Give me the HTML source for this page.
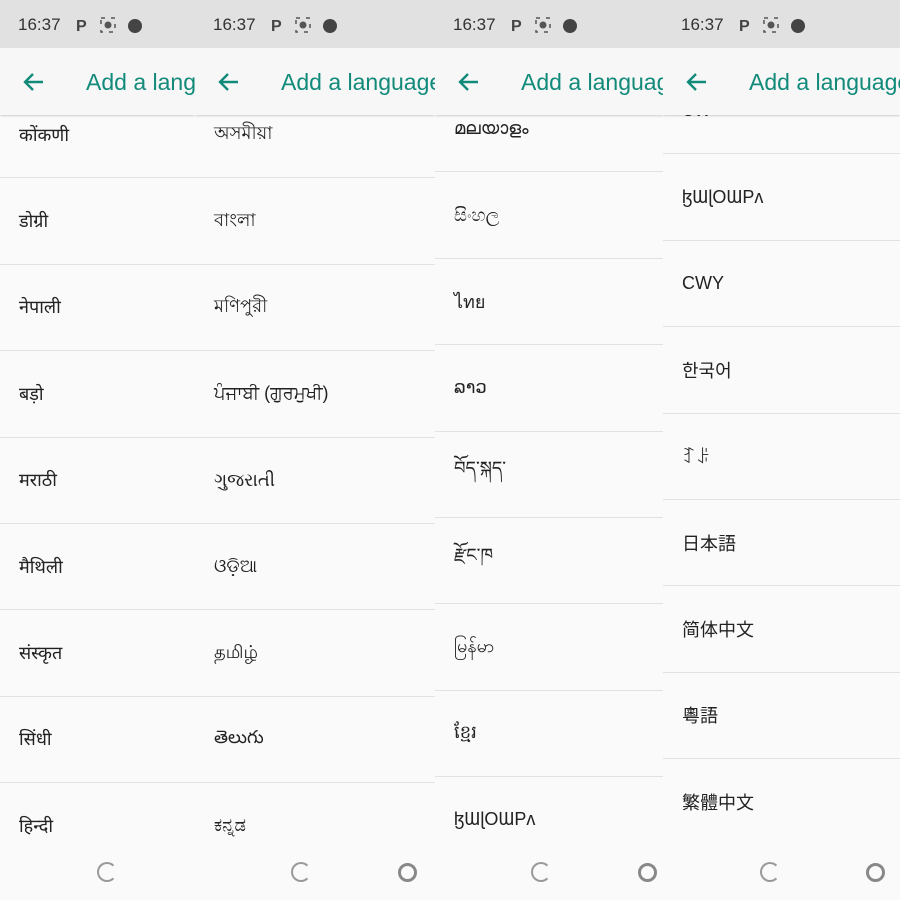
<!DOCTYPE html>
<html><head><meta charset="utf-8"><style>
*{margin:0;padding:0;box-sizing:border-box}
body{width:900px;height:900px;overflow:hidden;background:#fafafa;font-family:"Liberation Sans","Noto Sans CJK SC",sans-serif;position:relative}
.col{position:absolute;top:0;height:900px;overflow:hidden;background:#fafafa}
.sb{position:absolute;top:0;left:0;right:0;height:48px;background:#e1e1e1;z-index:3}
.sb .t{position:absolute;left:18px;top:15px;font-size:17px;color:#333}
.sb .ic{position:absolute;top:17px}
.tb{position:absolute;top:48px;left:0;right:0;height:67px;background:#f7f7f7;z-index:2;box-shadow:0 1px 2px rgba(0,0,0,.18);white-space:nowrap}
.tb .ar{position:absolute;left:22px;top:22px}
.tb .ti{position:absolute;left:86px;top:21px;font-size:23px;color:#128a7a}
.list{position:absolute;left:0;right:0}
.row{height:86.4px;border-bottom:1.5px solid #e2e2e2;display:flex;align-items:center;padding-left:19px;font-size:18px;font-weight:normal;color:#222;font-family:"Liberation Sans","DejaVu Sans","Noto Sans CJK JP",sans-serif}
.nav{position:absolute;top:845px;left:0;right:0;height:55px;background:#fafafa;z-index:2}
.ld{position:absolute;top:17px;width:20px;height:20px;border:2px solid #999;border-radius:50%;border-right-color:transparent;border-top-color:#999}
.rg{position:absolute;top:18px;width:19px;height:19px;border:3px solid #888;border-radius:50%}
</style></head><body>

<div class="col" style="left:0;width:195px">
 <div class="sb"><span class="t">16:37</span>
  <svg class="ic" style="left:76px" width="68" height="16"><text x="0" y="14" font-family="Liberation Sans" font-weight="bold" font-size="16" fill="#444">P</text><rect x="25" y="1" width="14" height="14" fill="none" stroke="#555" stroke-dasharray="4 6" stroke-width="1.5"/><circle cx="32" cy="8" r="3.5" fill="#555"/><circle cx="59" cy="9" r="7" fill="#444"/></svg></div>
 <div class="tb"><svg class="ar" width="24" height="24"><path d="M21 12H4M11 4l-8 8 8 8" fill="none" stroke="#128a7a" stroke-width="2.4"/></svg><span class="ti">Add a lang</span></div>
 <div class="list" style="top:92px">
  <div class="row">कोंकणी</div><div class="row">डोग्री</div><div class="row">नेपाली</div><div class="row">बड़ो</div><div class="row">मराठी</div><div class="row">मैथिली</div><div class="row">संस्कृत</div><div class="row">सिंधी</div><div class="row">हिन्दी</div>
 </div>
 <div class="nav"><div class="ld" style="left:97px"></div></div>
</div>

<div class="col" style="left:195px;width:240px">
 <div class="sb"><span class="t">16:37</span>
  <svg class="ic" style="left:76px" width="68" height="16"><text x="0" y="14" font-family="Liberation Sans" font-weight="bold" font-size="16" fill="#444">P</text><rect x="25" y="1" width="14" height="14" fill="none" stroke="#555" stroke-dasharray="4 6" stroke-width="1.5"/><circle cx="32" cy="8" r="3.5" fill="#555"/><circle cx="59" cy="9" r="7" fill="#444"/></svg></div>
 <div class="tb"><svg class="ar" width="24" height="24"><path d="M21 12H4M11 4l-8 8 8 8" fill="none" stroke="#128a7a" stroke-width="2.4"/></svg><span class="ti">Add a language</span></div>
 <div class="list" style="top:92px">
  <div class="row">অসমীয়া</div><div class="row">বাংলা</div><div class="row">মণিপুরী</div><div class="row">ਪੰਜਾਬੀ (ਗੁਰਮੁਖੀ)</div><div class="row">ગુજરાતી</div><div class="row">ଓଡ଼ିଆ</div><div class="row">தமிழ்</div><div class="row">తెలుగు</div><div class="row">ಕನ್ನಡ</div>
 </div>
 <div class="nav"><div class="ld" style="left:96px"></div><div class="rg" style="left:203px"></div></div>
</div>

<div class="col" style="left:435px;width:228px">
 <div class="sb"><span class="t">16:37</span>
  <svg class="ic" style="left:76px" width="68" height="16"><text x="0" y="14" font-family="Liberation Sans" font-weight="bold" font-size="16" fill="#444">P</text><rect x="25" y="1" width="14" height="14" fill="none" stroke="#555" stroke-dasharray="4 6" stroke-width="1.5"/><circle cx="32" cy="8" r="3.5" fill="#555"/><circle cx="59" cy="9" r="7" fill="#444"/></svg></div>
 <div class="tb"><svg class="ar" width="24" height="24"><path d="M21 12H4M11 4l-8 8 8 8" fill="none" stroke="#128a7a" stroke-width="2.4"/></svg><span class="ti">Add a language</span></div>
 <div class="list" style="top:86px">
  <div class="row">മലയാളം</div><div class="row">සිංහල</div><div class="row">ไทย</div><div class="row">ລາວ</div><div class="row">བོད་སྐད་</div><div class="row">རྫོང་ཁ</div><div class="row">မြန်မာ</div><div class="row">ខ្មែរ</div><div class="row">ɮƜɭOƜPʌ</div>
 </div>
 <div class="nav"><div class="ld" style="left:96px"></div><div class="rg" style="left:203px"></div></div>
</div>

<div class="col" style="left:663px;width:237px">
 <div class="sb"><span class="t">16:37</span>
  <svg class="ic" style="left:76px" width="68" height="16"><text x="0" y="14" font-family="Liberation Sans" font-weight="bold" font-size="16" fill="#444">P</text><rect x="25" y="1" width="14" height="14" fill="none" stroke="#555" stroke-dasharray="4 6" stroke-width="1.5"/><circle cx="32" cy="8" r="3.5" fill="#555"/><circle cx="59" cy="9" r="7" fill="#444"/></svg></div>
 <div class="tb"><svg class="ar" width="24" height="24"><path d="M21 12H4M11 4l-8 8 8 8" fill="none" stroke="#128a7a" stroke-width="2.4"/></svg><span class="ti">Add a language</span></div>
 <div class="list" style="top:68px">
  <div class="row">ᏣᎳ</div><div class="row">ɮƜɭOƜPʌ</div><div class="row">CWY</div><div class="row">한국어</div><div class="row">ꆈꌠ</div><div class="row">日本語</div><div class="row">简体中文</div><div class="row">粵語</div><div class="row">繁體中文</div>
 </div>
 <div class="nav"><div class="ld" style="left:97px"></div><div class="rg" style="left:203px"></div></div>
</div>
</body></html>
